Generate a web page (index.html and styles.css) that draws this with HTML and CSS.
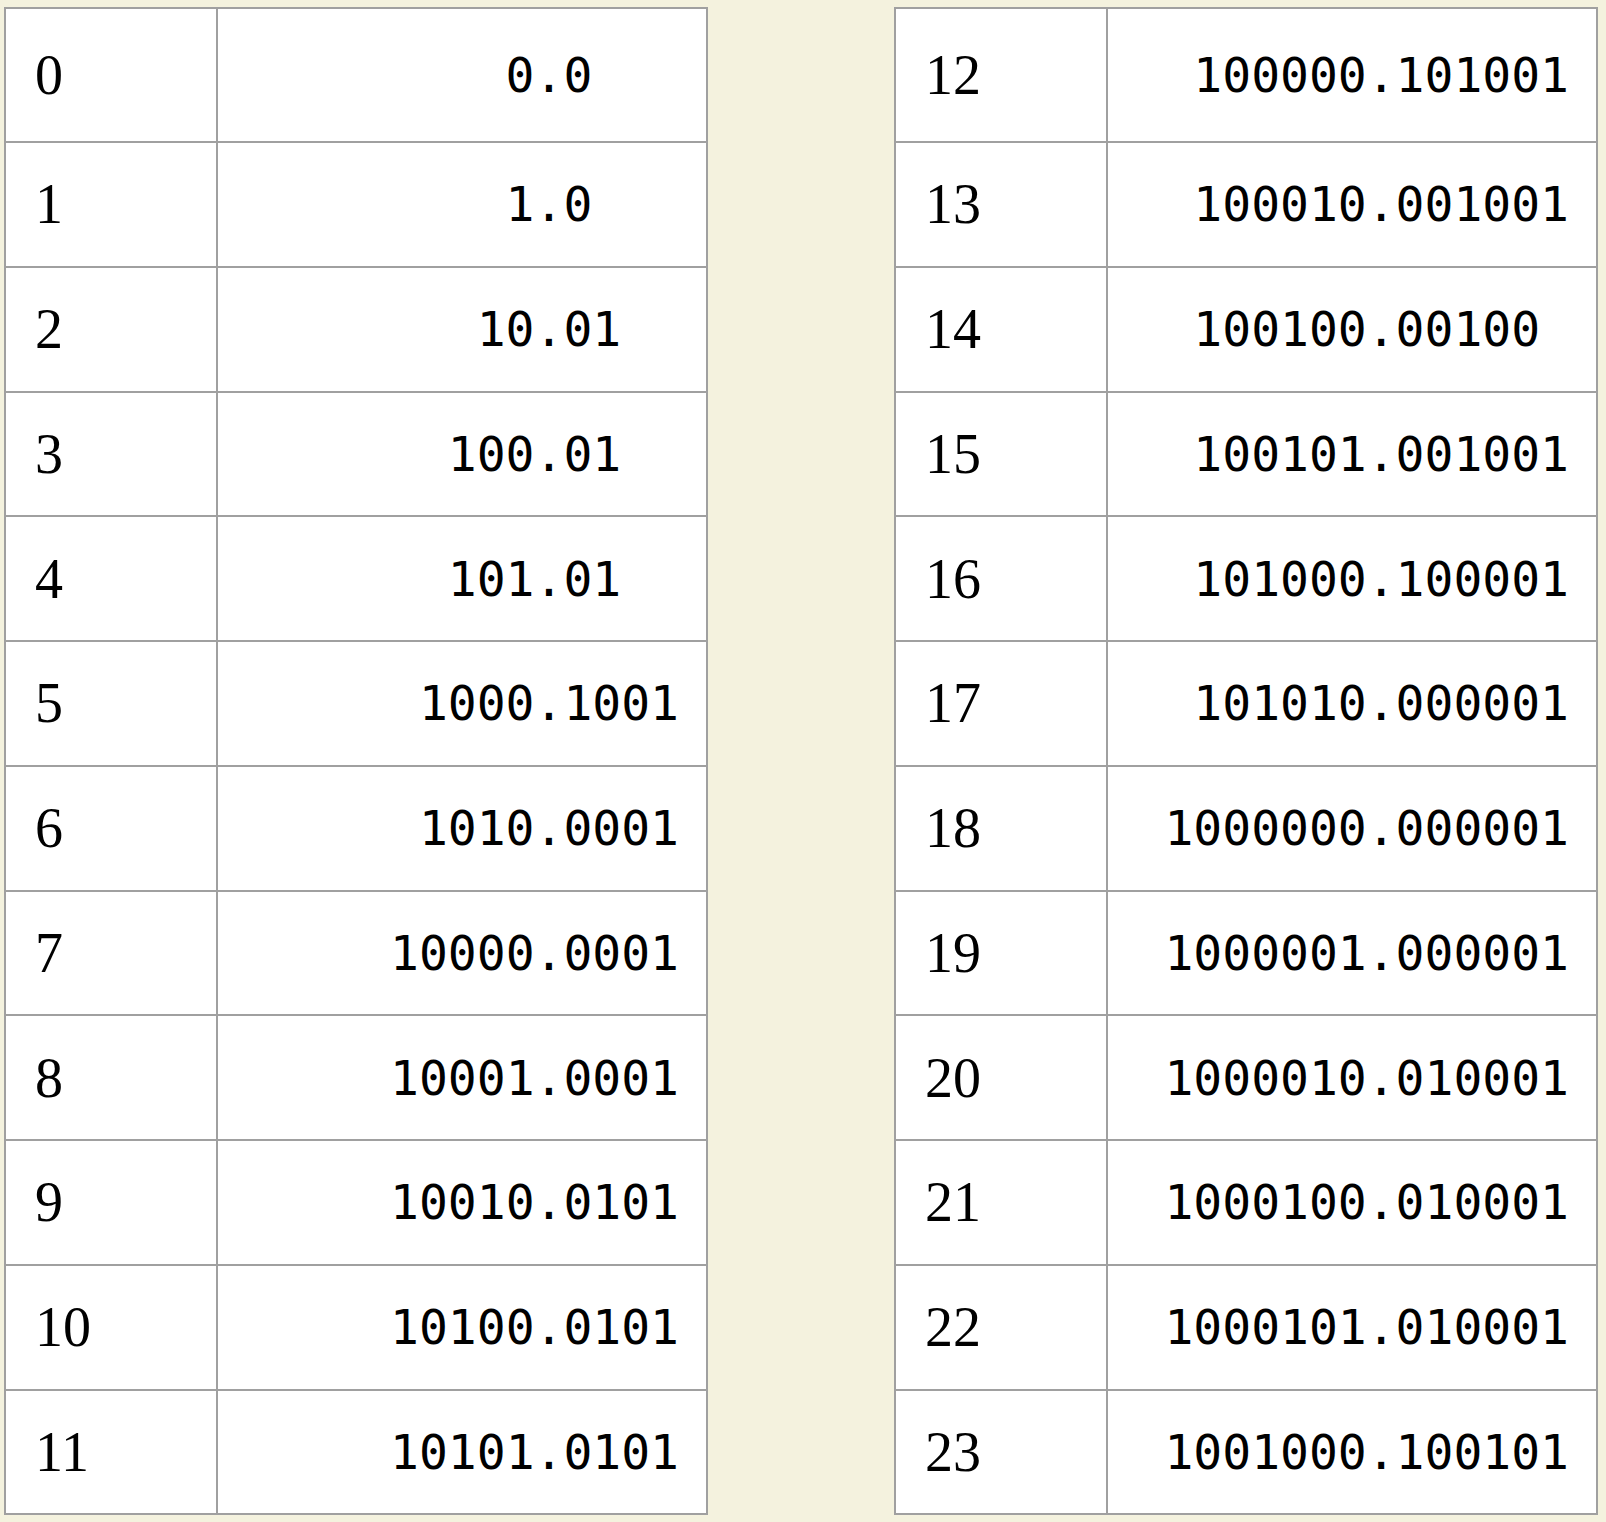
FILE: index.html
```html
<!DOCTYPE html>
<html lang="en">
<head>
<meta charset="utf-8">
<title>Number table</title>
<link rel="stylesheet" href="styles.css">
</head>
<body>
<div class="page">
  <table class="numtable narrow">
    <tbody>
      <tr><td class="idx">0</td><td class="val"><span class="num"><span class="int">0</span><span class="frac">.0</span></span></td></tr>
      <tr><td class="idx">1</td><td class="val"><span class="num"><span class="int">1</span><span class="frac">.0</span></span></td></tr>
      <tr><td class="idx">2</td><td class="val"><span class="num"><span class="int">10</span><span class="frac">.01</span></span></td></tr>
      <tr><td class="idx">3</td><td class="val"><span class="num"><span class="int">100</span><span class="frac">.01</span></span></td></tr>
      <tr><td class="idx">4</td><td class="val"><span class="num"><span class="int">101</span><span class="frac">.01</span></span></td></tr>
      <tr><td class="idx">5</td><td class="val"><span class="num"><span class="int">1000</span><span class="frac">.1001</span></span></td></tr>
      <tr><td class="idx">6</td><td class="val"><span class="num"><span class="int">1010</span><span class="frac">.0001</span></span></td></tr>
      <tr><td class="idx">7</td><td class="val"><span class="num"><span class="int">10000</span><span class="frac">.0001</span></span></td></tr>
      <tr><td class="idx">8</td><td class="val"><span class="num"><span class="int">10001</span><span class="frac">.0001</span></span></td></tr>
      <tr><td class="idx">9</td><td class="val"><span class="num"><span class="int">10010</span><span class="frac">.0101</span></span></td></tr>
      <tr><td class="idx">10</td><td class="val"><span class="num"><span class="int">10100</span><span class="frac">.0101</span></span></td></tr>
      <tr><td class="idx">11</td><td class="val"><span class="num"><span class="int">10101</span><span class="frac">.0101</span></span></td></tr>
    </tbody>
  </table>
  <table class="numtable wide">
    <tbody>
      <tr><td class="idx">12</td><td class="val"><span class="num"><span class="int">100000</span><span class="frac">.101001</span></span></td></tr>
      <tr><td class="idx">13</td><td class="val"><span class="num"><span class="int">100010</span><span class="frac">.001001</span></span></td></tr>
      <tr><td class="idx">14</td><td class="val"><span class="num"><span class="int">100100</span><span class="frac">.00100</span></span></td></tr>
      <tr><td class="idx">15</td><td class="val"><span class="num"><span class="int">100101</span><span class="frac">.001001</span></span></td></tr>
      <tr><td class="idx">16</td><td class="val"><span class="num"><span class="int">101000</span><span class="frac">.100001</span></span></td></tr>
      <tr><td class="idx">17</td><td class="val"><span class="num"><span class="int">101010</span><span class="frac">.000001</span></span></td></tr>
      <tr><td class="idx">18</td><td class="val"><span class="num"><span class="int">1000000</span><span class="frac">.000001</span></span></td></tr>
      <tr><td class="idx">19</td><td class="val"><span class="num"><span class="int">1000001</span><span class="frac">.000001</span></span></td></tr>
      <tr><td class="idx">20</td><td class="val"><span class="num"><span class="int">1000010</span><span class="frac">.010001</span></span></td></tr>
      <tr><td class="idx">21</td><td class="val"><span class="num"><span class="int">1000100</span><span class="frac">.010001</span></span></td></tr>
      <tr><td class="idx">22</td><td class="val"><span class="num"><span class="int">1000101</span><span class="frac">.010001</span></span></td></tr>
      <tr><td class="idx">23</td><td class="val"><span class="num"><span class="int">1001000</span><span class="frac">.100101</span></span></td></tr>
    </tbody>
  </table>
</div>
</body>
</html>
```
FILE: styles.css
```css
html, body {
  margin: 0;
  padding: 0;
  background: #f4f2de;
}

.page {
  display: flex;
  align-items: flex-start;
  gap: 186px;
  padding: 7px 0 0 4px;
}

.numtable {
  width: 704px;
  border-collapse: separate;
  border-spacing: 0;
  border: 1px solid #a0a0a0;
  background: #ffffff;
  table-layout: fixed;
  color: #000;
}

.numtable tr {
  height: 124.75px;
}

.numtable tr:first-child {
  height: 134px;
}

.numtable td {
  border: 1px solid #a0a0a0;
  padding: 0;
  vertical-align: middle;
}

.idx {
  width: 181px;
  padding-left: 29px !important;
  font-family: "Liberation Serif", "Times New Roman", serif;
  font-size: 56px;
  line-height: normal;
}

.val {
  text-align: right;
  padding-right: 27px !important;
  font-family: "DejaVu Sans Mono", "Liberation Mono", monospace;
  font-size: 48px;
  line-height: normal;
  white-space: pre;
}

.num {
  display: inline-flex;
}

.int {
  display: inline-block;
  text-align: right;
}

.frac {
  display: inline-block;
  text-align: left;
}

.narrow .int { width: 5ch; }
.narrow .frac { width: 5ch; }
.wide .int { width: 7ch; }
.wide .frac { width: 7ch; }
```
